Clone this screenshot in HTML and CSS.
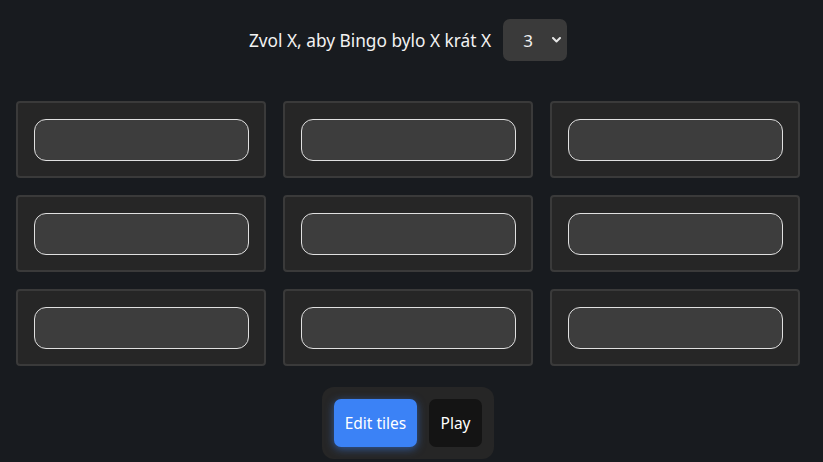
FILE: index.html
```html
<!DOCTYPE html>
<html lang="cs">
<head>
<meta charset="utf-8">
<title>Bingo</title>
<link rel="stylesheet" href="styles.css">
</head>
<body>
<main class="page">
  <header class="size-row">
    <label class="size-label" for="size">Zvol X, aby Bingo bylo X krát X</label>
    <div class="select-wrap">
      <select id="size" class="size-select">
        <option>3</option>
        <option>4</option>
        <option>5</option>
      </select>
      <svg class="chev" width="9" height="6" viewBox="0 0 9 6"><path d="M1 1l3.5 3.5L8 1" fill="none" stroke="#e6e6e6" stroke-width="2" stroke-linecap="round" stroke-linejoin="round"/></svg>
    </div>
  </header>
  <section class="grid">
    <div class="tile"><input class="tile-input" type="text"></div>
    <div class="tile"><input class="tile-input" type="text"></div>
    <div class="tile"><input class="tile-input" type="text"></div>
    <div class="tile"><input class="tile-input" type="text"></div>
    <div class="tile"><input class="tile-input" type="text"></div>
    <div class="tile"><input class="tile-input" type="text"></div>
    <div class="tile"><input class="tile-input" type="text"></div>
    <div class="tile"><input class="tile-input" type="text"></div>
    <div class="tile"><input class="tile-input" type="text"></div>
  </section>
  <nav class="actions">
    <button class="btn btn-edit">Edit tiles</button>
    <button class="btn btn-play">Play</button>
  </nav>
</main>
</body>
</html>
```
FILE: styles.css
```css
html, body {
  margin: 0;
  padding: 0;
  background: #181b1f;
  color: #f0f0f0;
  font-family: "Noto Sans", "Open Sans", sans-serif;
}
.page {
  width: 784px;
  margin-left: 16px;
  display: flex;
  flex-direction: column;
  align-items: center;
}
.size-row {
  display: flex;
  align-items: center;
  gap: 12px;
  margin-top: 19px;
  height: 42px;
}
.size-label {
  font-size: 17.3px;
  color: #f2f2f2;
}
.select-wrap {
  position: relative;
  width: 64px;
  height: 42px;
}
.size-select {
  appearance: none;
  -webkit-appearance: none;
  width: 64px;
  height: 42px;
  border: none;
  border-radius: 7px;
  background: #3a3a3a;
  color: #f0f0f0;
  font-family: inherit;
  font-size: 17px;
  padding: 0 0 0 20px;
  outline: none;
}
.chev {
  position: absolute;
  right: 6px;
  top: 18px;
  pointer-events: none;
}
.grid {
  margin-top: 40px;
  width: 784px;
  display: grid;
  grid-template-columns: repeat(3, 250px);
  grid-auto-rows: 77px;
  column-gap: 17px;
  row-gap: 17px;
}
.tile {
  box-sizing: border-box;
  background: #262626;
  border: 2px solid #3a3a3a;
  border-radius: 4px;
  padding: 16px 15px 15px 16px;
}
.tile-input {
  box-sizing: border-box;
  display: block;
  width: 215px;
  height: 42px;
  margin: 0;
  background: #3d3d3d;
  border: 1px solid #e0e0e0;
  border-radius: 12px;
  color: #f0f0f0;
  font-family: inherit;
  font-size: 16px;
  padding: 0 12px;
  outline: none;
}
.actions {
  margin-top: 21px;
  display: flex;
  gap: 12px;
  padding: 12px;
  background: #262626;
  border-radius: 12px;
}
.btn {
  height: 48px;
  border: none;
  border-radius: 7px;
  color: #ffffff;
  font-family: inherit;
  font-size: 15.5px;
  padding: 0;
  white-space: nowrap;
}
.btn-edit {
  width: 83px;
  background: #3b82f6;
  box-shadow: 0 2px 8px rgba(59, 130, 246, 0.55);
}
.btn-play {
  width: 53px;
  background: #141414;
}
```
